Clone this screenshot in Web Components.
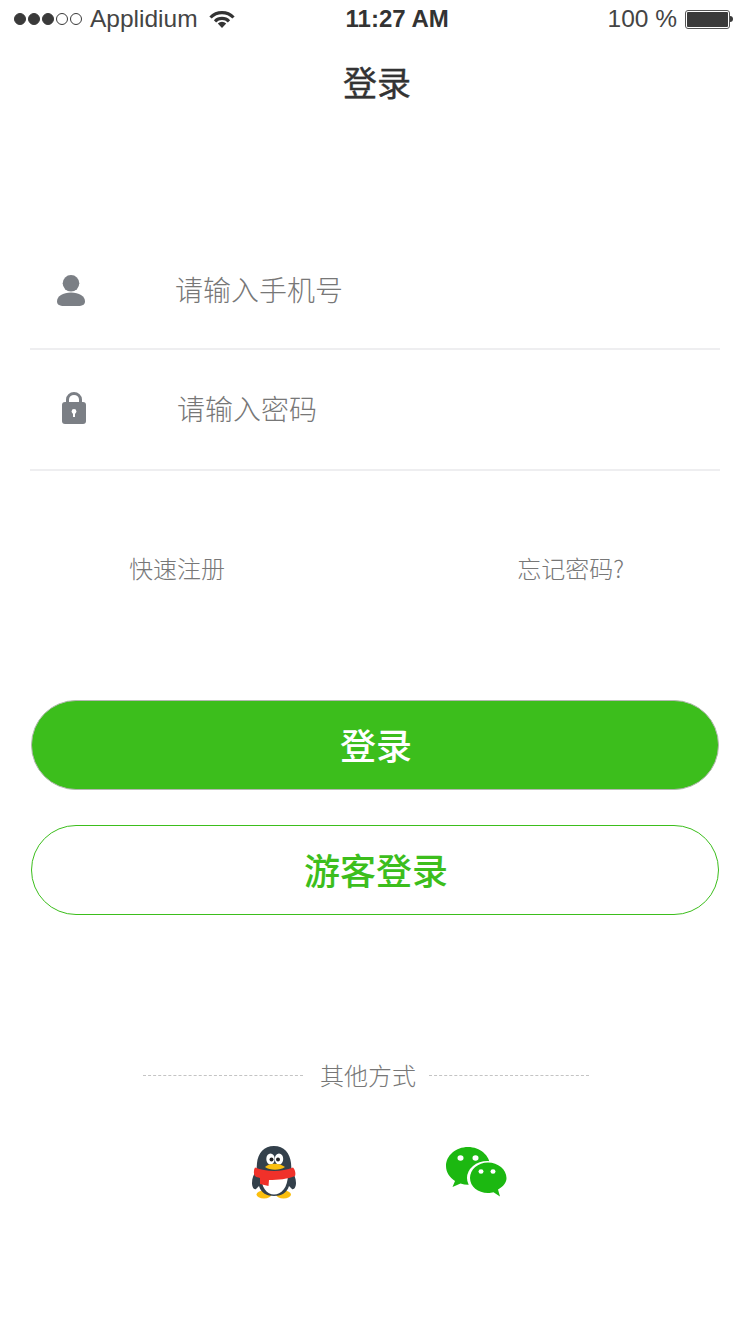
<!DOCTYPE html>
<html lang="zh">
<head>
<meta charset="utf-8">
<title>登录</title>
<style>
    html, body { margin: 0; padding: 0; background: #fff; }
    body { font-family: "Noto Sans CJK SC", sans-serif; color: #333; }
</style>
</head>
<body>
<login-page>
    <status-bar></status-bar>
    <nav-title>登录</nav-title>
    <login-form></login-form>
    <login-links></login-links>
    <login-button kind="solid">登录</login-button>
    <login-button kind="outline">游客登录</login-button>
    <other-ways></other-ways>
</login-page>

<script>
class LoginPage extends HTMLElement {
    constructor() {
        super();
        this.attachShadow({ mode: 'open' });
        this.shadowRoot.innerHTML = `
            <style>
                :host { display: flex; flex-direction: column; width: 750px; height: 1334px; overflow: hidden; background: #fff; }
            </style>
            <slot></slot>
        `;
    }
}

class StatusBar extends HTMLElement {
    constructor() {
        super();
        this.attachShadow({ mode: 'open' });
        this.shadowRoot.innerHTML = `
            <style>
                :host {
                    display: flex;
                    align-items: center;
                    height: 38px;
                    padding: 0 17px 0 14px;
                    font-family: "Liberation Sans", Arial, sans-serif;
                    font-size: 24.5px;
                    color: #444;
                }
                .left, .right { display: flex; align-items: center; }
                .right { margin-left: auto; }
                .dots { display: flex; gap: 2px; margin-right: 8px; }
                .dots i { box-sizing: border-box; width: 12px; height: 12px; border-radius: 50%; border: 1px solid #3a3a3a; }
                .dots i.on { background: #3a3a3a; }
                .wifi { margin-left: 11px; display: block; }
                .time { margin-left: 111px; font-size: 24px; font-weight: bold; color: #333; }
                .pct { margin-right: 8px; }
                .battery { display: flex; align-items: center; }
                .shell { box-sizing: border-box; width: 45px; height: 19px; padding: 1px; border: 1px solid #555; border-radius: 3px; }
                .fill { height: 100%; background: #3a3a3a; border-radius: 1px; }
                .tip { width: 3px; height: 6px; background: #3a3a3a; border-radius: 0 3px 3px 0; }
            </style>
            <div class="left">
                <div class="dots"><i class="on"></i><i class="on"></i><i class="on"></i><i></i><i></i></div>
                <span>Applidium</span>
                <svg class="wifi" width="26" height="18" viewBox="0 0 26 18">
                    <path d="M1.500 7.500 A16 16 0 0 1 24.500 7.500" fill="none" stroke="#333" stroke-width="3.200"/>
                    <path d="M6 11.300 A10 10 0 0 1 20 11.300" fill="none" stroke="#333" stroke-width="3.200"/>
                    <path d="M8.800 13.500 A6 6 0 0 1 17.200 13.500 L13 18 Z" fill="#333"/>
                </svg>
            </div>
            <div class="time">11:27 AM</div>
            <div class="right">
                <span class="pct">100 %</span>
                <div class="battery"><div class="shell"><div class="fill"></div></div><div class="tip"></div></div>
            </div>
        `;
    }
}

class NavTitle extends HTMLElement {
    constructor() {
        super();
        this.attachShadow({ mode: 'open' });
        this.shadowRoot.innerHTML = `
            <style>
                :host {
                    display: flex;
                    align-items: center;
                    justify-content: center;
                    box-sizing: border-box;
                    height: 90px;
                    padding: 0 0 3px 4px;
                    font-size: 34px;
                    font-weight: 400;
                    color: #333;
                    -webkit-text-stroke: 0.4px #333;
                }
            </style>
            <slot></slot>
        `;
    }
}

const ICON_USER = `
    <svg width="28" height="31" viewBox="0 0 28 31">
        <circle cx="14" cy="8.300" r="8.300" fill="#7b7f85"/>
        <path d="M7 31 C2.500 31 0 29.500 0 26.500 C0 21 6 17.500 14 17.500 C22 17.500 28 21 28 26.500 C28 29.500 25.500 31 21 31 Z" fill="#7b7f85"/>
    </svg>`;
const ICON_LOCK = `
    <svg width="24" height="32" viewBox="0 0 24 32">
        <path d="M5.500 12 V7.500 A6.500 6 0 0 1 18.500 7.500 V12" fill="none" stroke="#7b7f85" stroke-width="3"/>
        <rect x="0" y="10" width="24" height="22" rx="3" fill="#7b7f85"/>
        <circle cx="12" cy="19.500" r="2.400" fill="#fff"/>
        <rect x="11" y="20" width="2" height="5" fill="#fff"/>
    </svg>`;

class FormRow extends HTMLElement {
    constructor() {
        super();
        this.attachShadow({ mode: 'open' });
        this.shadowRoot.innerHTML = `
            <style>
                :host {
                    display: flex;
                    align-items: center;
                    box-sizing: border-box;
                    border-bottom: 2px solid #eeeef0;
                    font-size: 28px;
                    font-weight: 300;
                    color: #777;
                }
                .icon { display: flex; justify-content: center; width: 82px; padding-left: var(--icon-shift, 0); padding-bottom: var(--icon-lift, 0); box-sizing: border-box; }
                .icon svg { display: block; }
                .text { margin-left: var(--text-gap, 65px); padding-bottom: var(--text-lift, 2px); }
            </style>
            <div class="icon"></div>
            <div class="text"><slot></slot></div>
        `;
    }

    connectedCallback() {
        this.shadowRoot.querySelector('.icon').innerHTML = this.getAttribute('icon') === 'lock' ? ICON_LOCK : ICON_USER;
    }
}

class LoginForm extends HTMLElement {
    constructor() {
        super();
        this.attachShadow({ mode: 'open' });
        this.shadowRoot.innerHTML = `
            <style>
                :host { display: block; margin: 104px 30px 0; }
                .phone { height: 118px; --text-gap: 63px; --text-lift: 2px; }
                .password { height: 121px; --text-gap: 65px; --text-lift: 4px; --icon-shift: 6px; --icon-lift: 3px; }
            </style>
            <form-row class="phone" icon="user">请输入手机号</form-row>
            <form-row class="password" icon="lock">请输入密码</form-row>
        `;
    }
}

class LoginLinks extends HTMLElement {
    constructor() {
        super();
        this.attachShadow({ mode: 'open' });
        this.shadowRoot.innerHTML = `
            <style>
                :host {
                    display: flex;
                    justify-content: space-between;
                    align-items: center;
                    box-sizing: border-box;
                    height: 40px;
                    margin-top: 78px;
                    padding: 0 126px 4px 129px;
                    font-size: 24px;
                    font-weight: 300;
                    color: #777;
                }
            </style>
            <span>快速注册</span>
            <span>忘记密码?</span>
        `;
    }
}

class LoginButton extends HTMLElement {
    constructor() {
        super();
        this.attachShadow({ mode: 'open' });
        this.shadowRoot.innerHTML = `
            <style>
                :host {
                    display: flex;
                    align-items: center;
                    justify-content: center;
                    box-sizing: border-box;
                    height: 90px;
                    margin: 0 31px;
                    border-radius: 45px;
                    font-size: 36px;
                    font-weight: 500;
                }
                :host([kind="solid"]) {
                    margin-top: 111px;
                    padding: 0 0 3px 2px;
                    background: #3cbe1c;
                    border: 1px solid #b4b8b2;
                    color: #fff;
                }
                :host([kind="outline"]) {
                    margin-top: 35px;
                    padding: 0 0 3px 2px;
                    background: #fff;
                    border: 1px solid #3cbe1c;
                    color: #3cbe1c;
                }
            </style>
            <slot></slot>
        `;
    }
}

class OtherWays extends HTMLElement {
    constructor() {
        super();
        this.attachShadow({ mode: 'open' });
        this.shadowRoot.innerHTML = `
            <style>
                :host { display: block; margin-top: 141px; }
                .title {
                    display: flex;
                    align-items: center;
                    height: 40px;
                    padding-left: 143px;
                    font-size: 24px;
                    font-weight: 300;
                    color: #777;
                }
                .title span:nth-child(2) { position: relative; top: -2px; }
                .line { height: 0; margin-top: -1px; border-top: 1px dashed #c4c4c4; }
                .line.a { width: 160px; margin-right: 17px; }
                .line.b { width: 160px; margin-left: 13px; }
                .icons { display: flex; margin-top: 50px; padding-left: 252px; gap: 150px; align-items: flex-start; }
                svg { display: block; }
            </style>
            <div class="title"><span class="line a"></span><span>其他方式</span><span class="line b"></span></div>
            <div class="icons">
                <svg width="44" height="53" viewBox="0 0 44 53">
                    <ellipse cx="12" cy="48.500" rx="7.500" ry="4" fill="#fbbf0e"/>
                    <ellipse cx="31.500" cy="48.500" rx="7.500" ry="4" fill="#fbbf0e"/>
                    <path d="M22 0 C12 0 6 7 5 17 L4.500 24 C2 28 0 32 0 37 C0 41 2 44 4 43 L7 40 C9 47 15 50 22 50 C29 50 35 47 37 40 L40 43 C42 44 44 41 44 37 C44 32 42 28 39.500 24 L39 17 C38 7 32 0 22 0 Z" fill="#33404b"/>
                    <path d="M9 28 C9 42 15 48.500 22 48.500 C29 48.500 36 42 36 28 Z" fill="#fff"/>
                    <ellipse cx="18.500" cy="13" rx="4.200" ry="5.600" fill="#fff"/>
                    <ellipse cx="27" cy="13" rx="4.200" ry="5.600" fill="#fff"/>
                    <circle cx="19.500" cy="13.500" r="2" fill="#222"/>
                    <circle cx="26" cy="13.500" r="2" fill="#222"/>
                    <path d="M13 21 C17 16.500 28 16.500 33 21 C28 24.500 18 24.500 13 21 Z" fill="#fbbf0e"/>
                    <path d="M3 21.500 C14 26 30 26 41 21.500 C43 23 44 28 43 30 C36 33 26 34 17 34 L16.500 40 L8 38 L8 32 C6 31.500 4 31 3 30 C1.500 28 1.500 24 3 21.500 Z" fill="#f0312a"/>
                </svg>
                <svg width="62" height="52" viewBox="0 0 62 52">
                    <path d="M22 1 C10 1 0 9.500 0 20 C0 26 3.500 31.500 9 35 L6.500 41 L14.500 37.500 C17 38.300 19.500 38.800 22 38.800 C34 38.800 44 30.500 44 20 C44 9.500 34 1 22 1 Z" fill="#1cb811"/>
                    <ellipse cx="41.500" cy="32" rx="20.500" ry="17" fill="#fff"/>
                    <path d="M42 16.500 C32 16.500 24 23.500 24 32 C24 40.500 32 47 42 47 C44 47 46 46.700 47.500 46.200 L54 50.500 L52 43.500 C57.500 40.500 60.500 36.500 60.500 32 C60.500 23.500 52 16.500 42 16.500 Z" fill="#1cb811"/>
                    <ellipse cx="14.500" cy="12" rx="3" ry="2.700" fill="#fff"/>
                    <ellipse cx="29.500" cy="12" rx="3" ry="2.700" fill="#fff"/>
                    <ellipse cx="35" cy="25.500" rx="2.500" ry="2.200" fill="#fff"/>
                    <ellipse cx="47" cy="25.500" rx="2.500" ry="2.200" fill="#fff"/>
                </svg>
            </div>
        `;
    }
}

customElements.define('login-page', LoginPage);
customElements.define('status-bar', StatusBar);
customElements.define('nav-title', NavTitle);
customElements.define('form-row', FormRow);
customElements.define('login-form', LoginForm);
customElements.define('login-links', LoginLinks);
customElements.define('login-button', LoginButton);
customElements.define('other-ways', OtherWays);
</script>
</body>
</html>
